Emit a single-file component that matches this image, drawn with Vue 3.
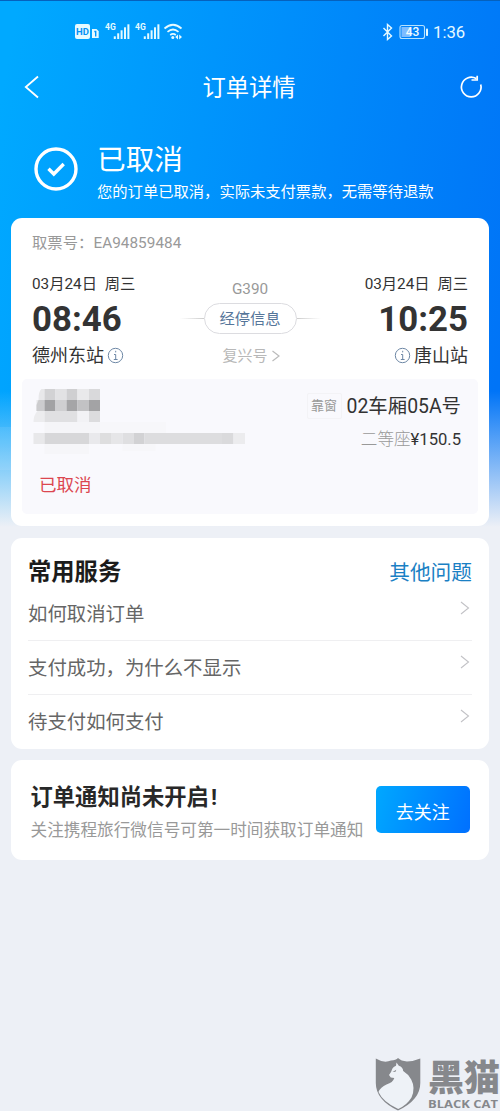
<script setup>
const bars = [0, 1, 2, 3, 4]
const services = ['如何取消订单', '支付成功，为什么不显示', '待支付如何支付']
const cells = [
  [44.5, 389, 11, 11, '#d2d2d4'], [55.5, 389, 11, 11, '#e2e2e4'], [66.5, 389, 11, 11, '#cfcfd1'],
  [77.5, 389, 11.5, 11, '#e9e9eb'], [89, 389, 11, 11, '#d9d9db'],
  [44.5, 400, 11, 11, '#a2a2a4'], [55.5, 400, 11, 11, '#cfcfd1'], [66.5, 400, 11, 11, '#a5a5a7'],
  [77.5, 400, 11.5, 11, '#c2c2c4'], [89, 400, 11, 11, '#a3a3a5'],
  [44.5, 411, 33, 11, '#e0e0e2'], [77.5, 411, 11.5, 11, '#f2f2f5'], [89, 411, 11, 11, '#dcdcde'],
  [44.5, 422, 55.5, 11, '#f5f5f8'], [100, 422, 66, 11, '#f7f7fa'],
  [33.5, 433, 11, 11, '#e8e8ea'], [44.5, 433, 44.5, 11, '#d7d7d9'], [89, 433, 11, 11, '#e9e9ec'],
  [100, 433, 11, 11, '#dededf'], [111, 433, 11.5, 11, '#e6e6e8'], [122.5, 433, 11, 11, '#dfdfe1'],
  [133.5, 433, 11, 11, '#d2d2d4'], [144.5, 433, 77.5, 11, '#dddddf'], [222, 433, 11.5, 11, '#dadadc'],
  [233.5, 433, 11.5, 11, '#ececee'],
  [44.5, 444, 44.5, 10, '#f6f6f9'], [122.5, 444, 33, 7, '#f7f7fa']
]
</script>

<template>
  <div class="page">
    <div class="hero-bg"></div>
    <header class="status">
      <svg class="status-left" width="112" height="20" viewBox="0 0 112 20">
        <rect x="1" y="2" width="15" height="15" rx="2" fill="#e6faff" />
        <text x="8.5" y="13" class="hd" text-anchor="middle">HD</text>
        <path d="M18 7h4.500l2.200 2.200V16H18z" fill="#e6faff" />
        <path d="M20.300 9.500h1.400v5" stroke="#0095fc" stroke-width="1.400" fill="none" />
        <g v-for="n in 2" :key="n" :transform="`translate(${(n - 1) * 30} 0)`">
          <text x="31" y="8.200" class="net">4G</text>
          <rect v-for="b in bars" :key="b" :x="39.800 + b * 3.400" :y="14.300 - b * 3" width="2" :height="2.700 + b * 3" fill="#e6faff" />
        </g>
        <g fill="none" stroke="#e6faff" stroke-width="1.700">
          <path d="M90.500 6.500q8.500-7.500 17 0" />
          <path d="M93.500 9.900q5.500-4.800 11 0" />
          <path d="M96.200 13q2.800-2.300 5.600 0" />
        </g>
        <circle cx="98.800" cy="15.500" r="1.500" fill="#e6faff" />
        <path d="M104 12.500l-2.800 2.500 2.800 2.500zM105.200 12.500l2.800 2.500-2.800 2.500z" fill="#e6faff" />
      </svg>
      <div class="status-right">
        <svg width="12" height="18" viewBox="0 0 12 18" fill="none" stroke="#e6faff" stroke-width="1.400">
          <path d="M1.500 5l8 8L5.500 16.500V1.500L9.500 5l-8 8" />
        </svg>
        <svg class="battery" width="30" height="16" viewBox="0 0 30 16">
          <rect x="1" y="1.500" width="24.500" height="13" rx="2" fill="none" stroke="#b5e2ff" stroke-width="1.100" />
          <rect x="2.500" y="3" width="9" height="10" fill="#7dbcff" />
          <rect x="27" y="4.500" width="2" height="7.500" rx=".8" fill="#e6faff" />
          <text x="13.500" y="12.300" class="charge" text-anchor="middle">43</text>
        </svg>
        <span class="clock">1:36</span>
      </div>
    </header>

    <nav class="nav">
      <svg width="16" height="24" viewBox="0 0 16 24" fill="none" stroke="#fff" stroke-width="1.800">
        <path d="M14 1.500L1.800 12 14 22.500" />
      </svg>
      <h1>订单详情</h1>
      <svg width="24" height="24" viewBox="0 0 24 24" fill="none" stroke="#fff" stroke-width="1.700">
        <path d="M17.200 3.600A9.800 9.800 0 1 0 21.700 9.500M12.500 5h5.700V.8" />
      </svg>
    </nav>

    <section class="result">
      <svg width="44" height="44" viewBox="0 0 44 44" fill="none" stroke="#fff">
        <circle cx="22" cy="22" r="20" stroke-width="3.400" />
        <path d="M14.500 21.800l5.300 5.200L29.700 17" stroke-width="3.400" />
      </svg>
      <div>
        <h2>已取消</h2>
        <p>您的订单已取消，实际未支付票款，无需等待退款</p>
      </div>
    </section>

    <section class="card ticket">
      <p class="pickup">取票号：EA94859484</p>
      <div class="trip">
        <div class="stop">
          <p class="date">03月24日 周三</p>
          <p class="time">08:46</p>
          <p class="station"><span>德州东站</span>
            <svg width="17" height="17" viewBox="0 0 17 17" fill="none" stroke="#6d87a5"><circle cx="8.500" cy="8.500" r="7.200" /><path d="M8.700 3.800v1.600M7 7.500h1.700v5M6.800 12.500h3.800" /></svg>
          </p>
        </div>
        <div class="middle">
          <p class="train">G390</p>
          <div class="via"><i></i><span>经停信息</span><i></i></div>
          <p class="model">复兴号
            <svg width="10" height="14" viewBox="0 0 10 14" fill="none" stroke="#bbb" stroke-width="1.200"><path d="M1.500 2L8 7l-6.500 5" /></svg>
          </p>
        </div>
        <div class="stop end">
          <p class="date">03月24日 周三</p>
          <p class="time">10:25</p>
          <p class="station">
            <svg width="17" height="17" viewBox="0 0 17 17" fill="none" stroke="#6d87a5"><circle cx="8.500" cy="8.500" r="7.200" /><path d="M8.700 3.800v1.600M7 7.500h1.700v5M6.800 12.500h3.800" /></svg>
            <span>唐山站</span></p>
        </div>
      </div>
      <div class="seat">
        <p class="place"><span class="tag">靠窗</span><span class="coach">02车厢05A号</span></p>
        <p class="price"><span>二等座</span>¥150.5</p>
        <p class="state">已取消</p>
      </div>
    </section>

    <svg class="mosaic" width="260" height="100" viewBox="0 382 260 100">
      <path d="M0 427H11V470H0z" fill="#fff" opacity=".08" />
      <path d="M44.500 389h-3q-3 2-3 11h-2v11h8z" fill="#e8e8ea" />
      <path d="M44.500 400h-6l-2 5v6h8z" fill="#ccccce" />
      <path d="M44.500 411h-7q-4 4-4 11h11z" fill="#ececee" />
      <rect v-for="(c, i) in cells" :key="i" :x="c[0]" :y="c[1]" :width="c[2]" :height="c[3]" :fill="c[4]" />
    </svg>

    <section class="card services">
      <div class="services-head"><h3>常用服务</h3><a>其他问题</a></div>
      <div v-for="s in services" :key="s" class="row">
        <span>{{ s }}</span>
        <svg width="10" height="14" viewBox="0 0 10 14" fill="none" stroke="#c2c2c6" stroke-width="1.100"><path d="M1 1l7.500 6L1 13" /></svg>
      </div>
    </section>

    <section class="card notice">
      <div>
        <h3>订单通知尚未开启<span>!</span></h3>
        <p>关注携程旅行微信号可第一时间获取订单通知</p>
      </div>
      <button>去关注</button>
    </section>

    <footer class="brand">
      <svg width="48" height="54" viewBox="0 0 48 54">
        <path d="M.8 1.500Q9 6.500 16 3.500q5-.5 7-2.500 3 3 9 3.500 6 0 13.300-3V26q0 17-22.300 27.500Q.8 43 .8 26z" fill="#86888c" />
        <path d="M21.500 5.500l2.300 3.300q4.200 1.200 4.400 5.200 5 3 8 8.500 4.500 8.500.3 18Q32 48 23.200 52 8 45 3.500 35q2-5 8-7.500 6.500-2 7.800-6.500l-3.500-.5-1.800-2.500q2.500-3 3.300-6.200 1-2.200 3.700-3z" fill="#eef2f7" />
        <path d="M17.500 15l3.800-2.200-.8 2z" fill="#86888c" />
      </svg>
      <div class="brand-name">
        <strong>黑猫</strong>
        <svg width="72" height="13"><text x="0" y="10" textLength="70" lengthAdjust="spacingAndGlyphs">BLACK CAT</text></svg>
      </div>
    </footer>
  </div>
</template>

<style>
body { background: #edf0f6; }
</style>

<style scoped>
* { box-sizing: border-box; margin: 0; padding: 0; }
.page { position: relative; isolation: isolate; width: 500px; height: 1111px; overflow: hidden; display: flex; flex-direction: column; background: #edf0f6; font-family: Roboto, "Noto Sans CJK SC", sans-serif; color: #333; }
svg { display: block; flex: none; }
.hero-bg { position: absolute; z-index: -1; inset: 0 0 auto 0; height: 530px; background: linear-gradient(180deg, rgba(237,240,246,0) 390px, #edf0f6 526px), linear-gradient(100deg, #00a9ff 3%, #0074f7 95%); border-top: 1px solid #0561bd; }
.status { height: 54px; padding: 22px 34px 0 74px; display: flex; justify-content: space-between; align-items: flex-start; color: #e6faff; }
.hd { font: 700 9.500px Roboto, sans-serif; fill: #0491f5; }
.net { font: 700 8.500px Roboto, sans-serif; fill: #e6faff; }
.charge { font: 500 12px Roboto, sans-serif; fill: #f2fcff; }
.status-right { display: flex; align-items: center; height: 20px; }
.battery { margin-left: 5px; }
.clock { margin-left: 4px; padding-top: 1px; font-size: 16.700px; line-height: 20px; width: 33px; white-space: nowrap; }
.nav { height: 66px; padding: 0 17px 0 24px; display: flex; align-items: center; justify-content: space-between; color: #fff; }
.nav h1 { font-size: 23.300px; font-weight: 400; line-height: 34px; margin-left: -1px; padding-top: 2px; }
.result { height: 98px; padding: 20px 0 0 34px; display: flex; color: #fff; }
.result > svg { margin-top: 7px; }
.result div { margin-left: 19px; white-space: nowrap; }
.result h2 { font-size: 28.700px; line-height: 38px; height: 38px; padding-top: 1px; font-weight: 400; }
.result p { font-size: 15.300px; line-height: 24px; margin-top: 2px; }
.card { width: 478px; margin-left: 11px; border-radius: 11px; background: #fff; }
.ticket { height: 308px; padding-top: 15px; }
.pickup { padding-left: 21px; font-size: 15.300px; line-height: 20px; color: #999; letter-spacing: .05px; }
.trip { display: flex; justify-content: space-between; padding: 20px 21px 0; height: 126px; }
.stop { width: 128px; white-space: nowrap; }
.date { font-size: 15.300px; line-height: 22px; word-spacing: 4px; }
.time { font-size: 34.800px; line-height: 40px; font-weight: 700; margin-top: 4px; }
.station { display: flex; align-items: center; gap: 3px; font-size: 18px; line-height: 28px; height: 28px; margin-top: 3px; }
.station svg { margin-top: -2px; }
.end { text-align: right; }
.end .station { justify-content: flex-end; }
.middle { display: flex; flex-direction: column; align-items: center; padding-top: 6px; color: #999; }
.train { font-size: 15.300px; line-height: 20px; }
.via { display: flex; align-items: center; margin-top: 4px; }
.via span { width: 93px; height: 31px; border: 1.500px solid #dcdce0; border-radius: 16px; color: #557599; font-size: 15.300px; line-height: 31px; text-align: center; }
.via i { width: 24px; height: 1px; background: linear-gradient(90deg, #fff, #ccc); }
.via i:last-child { background: linear-gradient(270deg, #fff, #ccc); }
.model { display: flex; align-items: center; gap: 3px; font-size: 15px; line-height: 22px; margin-top: 11px; padding-left: 3px; color: #b8b8b8; }
.seat { height: 135px; margin: 0 11px; padding: 13px 17px 0; border-radius: 5px; background: #f9f9fd; }
.place { display: flex; justify-content: flex-end; align-items: center; font-size: 19.400px; line-height: 28px; }
.coach { padding-top: 1px; height: 28px; }
.tag { width: 35px; height: 26px; margin-right: 5px; border: 1px solid #f3f3f6; border-radius: 2px; color: #999; font-size: 13px; line-height: 24px; text-align: center; }
.price { display: flex; justify-content: flex-end; font-size: 16.600px; line-height: 24px; margin-top: 8px; }
.price span { color: #999; font-weight: 300; }
.state { color: #dc4650; font-size: 17.500px; line-height: 26px; margin-top: 20px; }
.mosaic { position: absolute; left: 0; top: 382px; }
.services { height: 211px; margin-top: 11.500px; padding: 18px 17px 0; }
.services-head { display: flex; justify-content: space-between; align-items: center; height: 31px; }
.services h3 { font-size: 23.300px; line-height: 32px; color: #1c1c1c; padding-top: 2px; }
.services a { font-size: 20.700px; color: #1a80c4; }
.row { display: flex; justify-content: space-between; height: 54px; padding: 14px 2px 0 0; border-top: 1px solid #efeff1; font-size: 19.400px; line-height: 28px; color: #666; }
.services-head + .row { border-top-color: transparent; margin-top: -1px; }
.notice { height: 100px; margin-top: 11px; padding: 0 19.500px 0 19.500px; display: flex; align-items: center; justify-content: space-between; white-space: nowrap; }
.notice h3 { font-size: 22.300px; line-height: 32px; color: #282828; margin-top: 4px; }
.notice h3 span { margin-left: 2px; }
.notice p { font-size: 16.650px; line-height: 24px; margin-top: 6px; color: #999; }
.notice button { width: 93.500px; height: 47px; border: 0; border-radius: 5px; background: linear-gradient(105deg, #00a8ff, #0070ff); color: #fff; font: 18px/49px Roboto, "Noto Sans CJK SC", sans-serif; padding-top: 2px; }
.brand { margin: auto 0 0 375px; height: 54px; display: flex; gap: 5px; color: #86888c; }
.brand-name { display: flex; flex-direction: column; padding-top: 4px; }
.brand strong { display: block; font-size: 36px; line-height: 36px; font-weight: 900; height: 37px; white-space: nowrap; }
.brand text { font: 700 11px "Open Sans", sans-serif; fill: #86888c; }
</style>
